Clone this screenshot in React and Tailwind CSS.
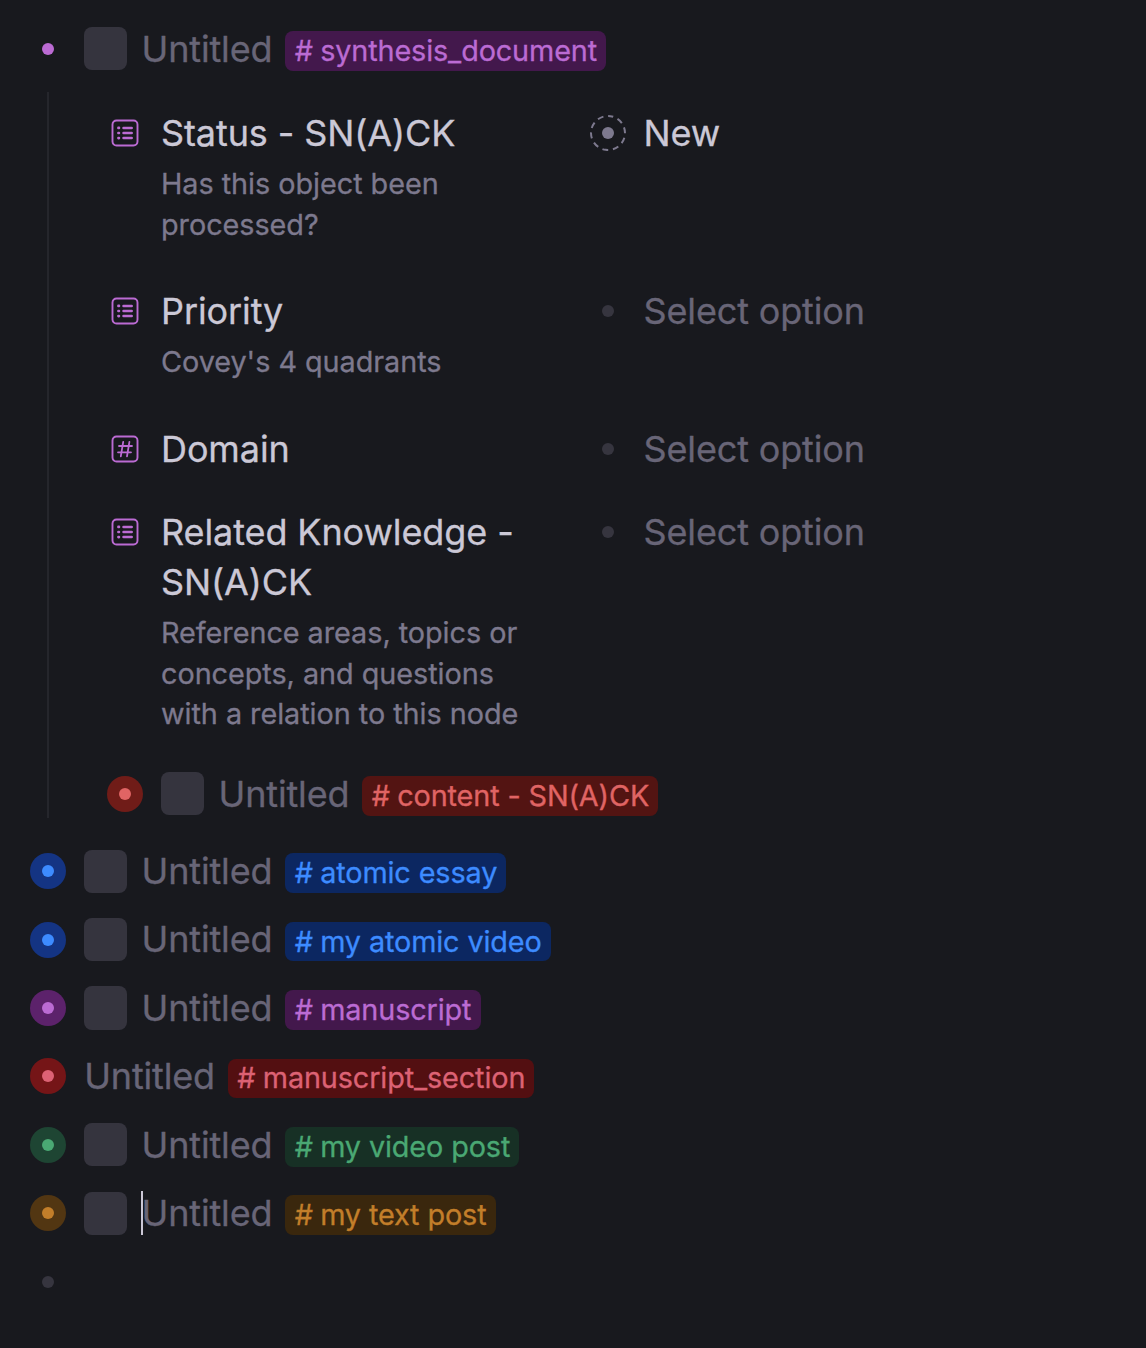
const TAGS = {
  purple: "bg-[#43184c] text-[#bb6bd3]",
  red: "bg-[#531412] text-[#e06464]",
  blue: "bg-[#0c2761] text-[#3d8bff]",
  rose: "bg-[#530f11] text-[#dc6274]",
  green: "bg-[#173025] text-[#4aa873]",
  amber: "bg-[#3a270d] text-[#c27e2a]",
};

const BULLETS = {
  plain: ["", "bg-[#bb6bd3]"],
  empty: ["", "bg-[#36353f]"],
  purple: ["bg-[#5c226b]", "bg-[#bb6bd3]"],
  red: ["bg-[#701c18]", "bg-[#e06464]"],
  blue: ["bg-[#143483]", "bg-[#3d8bff]"],
  rose: ["bg-[#751517]", "bg-[#dc6274]"],
  green: ["bg-[#1e4533]", "bg-[#4aa873]"],
  amber: ["bg-[#523612]", "bg-[#c27e2a]"],
};

function Bullet({ tone }) {
  const [ring, dot] = BULLETS[tone];
  return (
    <span className={`flex size-9 shrink-0 items-center justify-center rounded-full ${ring}`}>
      <span className={`size-3 rounded-full ${dot}`} />
    </span>
  );
}

function Node({ bullet, tag, label, checkbox = true, caret = false }) {
  return (
    <div className="flex h-[50px] shrink-0 items-center">
      <Bullet tone={bullet} />
      {checkbox && <span className="ml-[18px] size-[43.2px] shrink-0 rounded-lg bg-[#35343e]" />}
      <span className={`relative mb-[0.3px] whitespace-nowrap text-[36px] leading-[50px] tracking-[-0.16px] text-[#686577] ${checkbox ? "ml-[14.4px]" : "ml-[18.2px]"}`}>
        {caret && <span className="absolute top-[3px] -left-px h-11 w-0.5 bg-[#cbc8d6]" />}
        Untitled
      </span>
      <span className={`mt-1 ml-[13.1px] flex h-[39.6px] items-center gap-[7.4px] whitespace-nowrap rounded-lg px-[9.2px] text-[28.8px] leading-10 tracking-[-0.12px] ${TAGS[tag]}`}>
        <span>#</span>
        <span>{label}</span>
      </span>
    </div>
  );
}

function ListIcon() {
  return (
    <svg viewBox="0 0 28 28" className="size-7" fill="none" stroke="#bb6bd3" strokeLinecap="round">
      <rect x="1.5" y="1.5" width="25" height="25" rx="4" strokeWidth="1.9" />
      <path d="M12.5 8.9h8.2M12.5 14h8.2M12.5 19.1h8.2" strokeWidth="2.5" />
      <path d="M7.4 8.9h.6M7.4 14h.6M7.4 19.1h.6" strokeWidth="2.6" />
    </svg>
  );
}

function HashIcon() {
  return (
    <svg viewBox="0 0 28 28" className="size-7" fill="none" stroke="#bb6bd3" strokeLinecap="round">
      <rect x="1.5" y="1.5" width="25" height="25" rx="4" strokeWidth="1.9" />
      <path d="M12.2 6.8 9.8 21.4M18.4 6.8 16 21.4M8 11h13M7 17.3h13" strokeWidth="1.8" />
    </svg>
  );
}

function Field({ icon, title, description, value, className }) {
  return (
    <div className={`flex ${className}`}>
      <span className="flex h-[50px] w-9 shrink-0 items-center justify-center">
        {icon === "hash" ? <HashIcon /> : <ListIcon />}
      </span>
      <div className="ml-[18px] w-[429px]">
        <div className="whitespace-pre-line text-[36px] leading-[50px] tracking-[-0.1px] text-[#cbc8d6]">{title}</div>
        {description && (
          <div className="mt-[6.3px] whitespace-pre-line text-[28.8px] leading-[40.4px] tracking-[-0.04px] text-[#7d798e]">{description}</div>
        )}
      </div>
      <div className="flex h-[50px] items-center gap-[17.6px]">
        {value ? (
          <svg viewBox="0 0 36 36" className="size-9">
            <circle cx="18" cy="18" r="17" fill="none" stroke="#7d798e" strokeWidth="2" strokeDasharray="6 4.68" strokeDashoffset="3" transform="rotate(-82 18 18)" />
            <circle cx="18" cy="18" r="6" fill="#7d798e" />
          </svg>
        ) : (
          <Bullet tone="empty" />
        )}
        <span className={`whitespace-nowrap text-[36px] leading-[50px] tracking-[-0.16px] ${value ? "text-[#cbc8d6]" : "text-[#686577]"}`}>
          {value || "Select option"}
        </span>
      </div>
    </div>
  );
}

export default function App() {
  return (
    <div className="flex h-[1348px] w-[1146px] flex-col overflow-hidden bg-[#18191e] pt-[23.9px] pl-[30px] font-['Inter',sans-serif] [-webkit-text-stroke:0.3px_currentColor]">
      <Node bullet="plain" tag="purple" label="synthesis_document" />
      <div className="mt-[18.1px] ml-[17px] h-[726px] shrink-0 border-l-2 border-[#25262c] pt-4 pl-[58px]">
        <Field className="h-[178px]" title="Status - SN(A)CK" description={"Has this object been\nprocessed?"} value="New" />
        <Field className="h-[138px]" title="Priority" description="Covey's 4 quadrants" />
        <Field className="h-[83px]" icon="hash" title="Domain" />
        <Field
          className="h-[261.8px]"
          title={"Related Knowledge -\nSN(A)CK"}
          description={"Reference areas, topics or\nconcepts, and questions\nwith a relation to this node"}
        />
        <Node bullet="red" tag="red" label="content - SN(A)CK" />
      </div>
      <div className="mt-[28.2px] flex flex-col gap-[18.4px]">
        <Node bullet="blue" tag="blue" label="atomic essay" />
        <Node bullet="blue" tag="blue" label="my atomic video" />
        <Node bullet="purple" tag="purple" label="manuscript" />
        <Node bullet="rose" tag="rose" label="manuscript_section" checkbox={false} />
        <Node bullet="green" tag="green" label="my video post" />
        <Node bullet="amber" tag="amber" label="my text post" caret />
        <div className="flex h-[50px] items-center">
          <Bullet tone="empty" />
        </div>
      </div>
    </div>
  );
}
